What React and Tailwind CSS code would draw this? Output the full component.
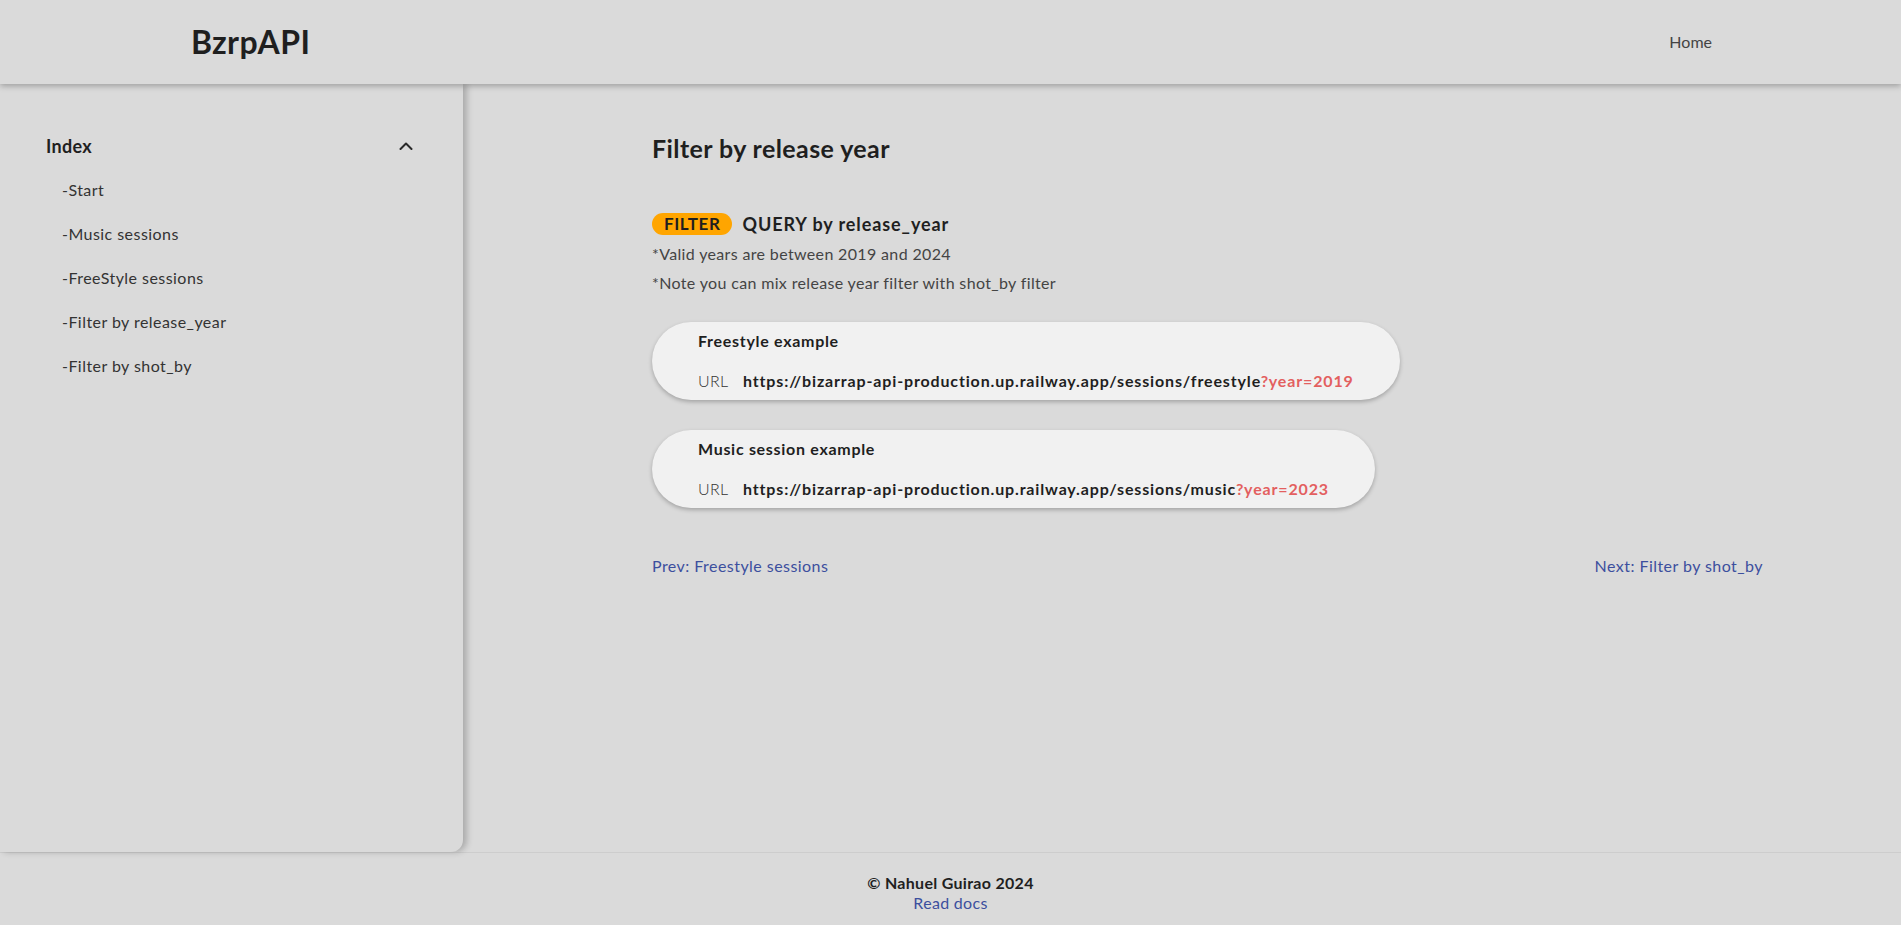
import React, { useState } from "react";

const indexLinks = [
  "-Start",
  "-Music sessions",
  "-FreeStyle sessions",
  "-Filter by release_year",
  "-Filter by shot_by",
];

const examples = [
  {
    title: "Freestyle example",
    url: "https://bizarrap-api-production.up.railway.app/sessions/freestyle",
    query: "?year=2019",
  },
  {
    title: "Music session example",
    url: "https://bizarrap-api-production.up.railway.app/sessions/music",
    query: "?year=2023",
  },
];

const Chevron = ({ open }) => (
  <svg width="14" height="8" viewBox="0 0 14 8" fill="none" className={open ? "" : "rotate-180"}>
    <path d="M1.5 7L7 1.5L12.5 7" stroke="#2a2a2a" strokeWidth="2" strokeLinecap="round" strokeLinejoin="round" />
  </svg>
);

const App = () => {
  const [open, setOpen] = useState(true);

  return (
    <div className="min-h-screen flex flex-col bg-[#dadada] text-[#1f1f1f] font-['Lato','Open_Sans',sans-serif]">
      {/* header */}
      <header className="relative z-20 h-[84px] flex items-center justify-between pl-[191px] pr-[189px] bg-[#dadada] shadow-[0_2px_6px_rgba(0,0,0,0.28)]">
        <h1 className="text-[32px] font-bold tracking-[0.4px]">BzrpAPI</h1>
        <a href="#" className="text-[16px] text-[#444]">Home</a>
      </header>

      <div className="flex-1 flex">
        {/* sidebar */}
        <aside className="relative z-10 w-[463px] shrink-0 rounded-br-[12px] bg-[#dadada] shadow-[4px_0_6px_rgba(0,0,0,0.22)] pt-[40px] pl-[46px] pr-[50px]">
          <button
            onClick={() => setOpen(!open)}
            className="w-full h-[44px] flex items-center justify-between"
          >
            <span className="text-[18px] font-bold tracking-[0.3px]">Index</span>
            <Chevron open={open} />
          </button>
          {open && (
            <ul className="pl-[16px]">
              {indexLinks.map((l) => (
                <li key={l} className="h-[44px] flex items-center text-[16px] text-[#333] tracking-[0.45px]">
                  <a href="#">{l}</a>
                </li>
              ))}
            </ul>
          )}
        </aside>

        {/* main */}
        <main className="flex-1 pt-[48px] pl-[189px] pr-[138px]">
          <h2 className="text-[25px] leading-[32px] font-bold tracking-[0.4px]">Filter by release year</h2>

          <div className="mt-[49px] flex items-center gap-[10px] h-[22px]">
            <span className="h-[22px] px-[12px] rounded-[11px] bg-[#ffa500] flex items-center text-[17px] font-bold tracking-[0.6px] text-[#1f1f1f]">
              FILTER
            </span>
            <span className="text-[18px] font-bold tracking-[0.9px]">QUERY by release_year</span>
          </div>
          <p className="mt-[4px] text-[16px] leading-[29px] text-[#444] tracking-[0.35px]">*Valid years are between 2019 and 2024</p>
          <p className="text-[16px] leading-[29px] text-[#444] tracking-[0.35px]">*Note you can mix release year filter with shot_by filter</p>

          <div className="mt-[25px] flex flex-col items-start gap-[30px]">
            {examples.map((e) => (
              <div
                key={e.title}
                className="rounded-full bg-[#f1f1f1] shadow-[0_2px_4px_rgba(0,0,0,0.25)] px-[46px] py-[9px]"
              >
                <div className="text-[16px] leading-[20px] font-bold tracking-[0.7px]">{e.title}</div>
                <div className="mt-[20px] flex text-[16px] leading-[20px]">
                  <span className="w-[45px] font-light text-[#333] tracking-[0.3px]">URL</span>
                  <span className="font-bold tracking-[0.85px]">
                    {e.url}
                    <span className="text-[#e35f5f]">{e.query}</span>
                  </span>
                </div>
              </div>
            ))}
          </div>

          <div className="mt-[48px] flex justify-between text-[16px] leading-[20px] text-[#3c4f9e] tracking-[0.45px]">
            <a href="#">Prev: Freestyle sessions</a>
            <a href="#">Next: Filter by shot_by</a>
          </div>
        </main>
      </div>

      {/* footer */}
      <footer className="h-[73px] pt-[20px] border-t border-[#cdcdcd] flex flex-col items-center text-[16px] leading-[20px]">
        <span className="font-bold tracking-[0.3px]">© Nahuel Guirao 2024</span>
        <a href="#" className="text-[#3c4f9e] tracking-[0.3px]">Read docs</a>
      </footer>
    </div>
  );
};

export default App;
